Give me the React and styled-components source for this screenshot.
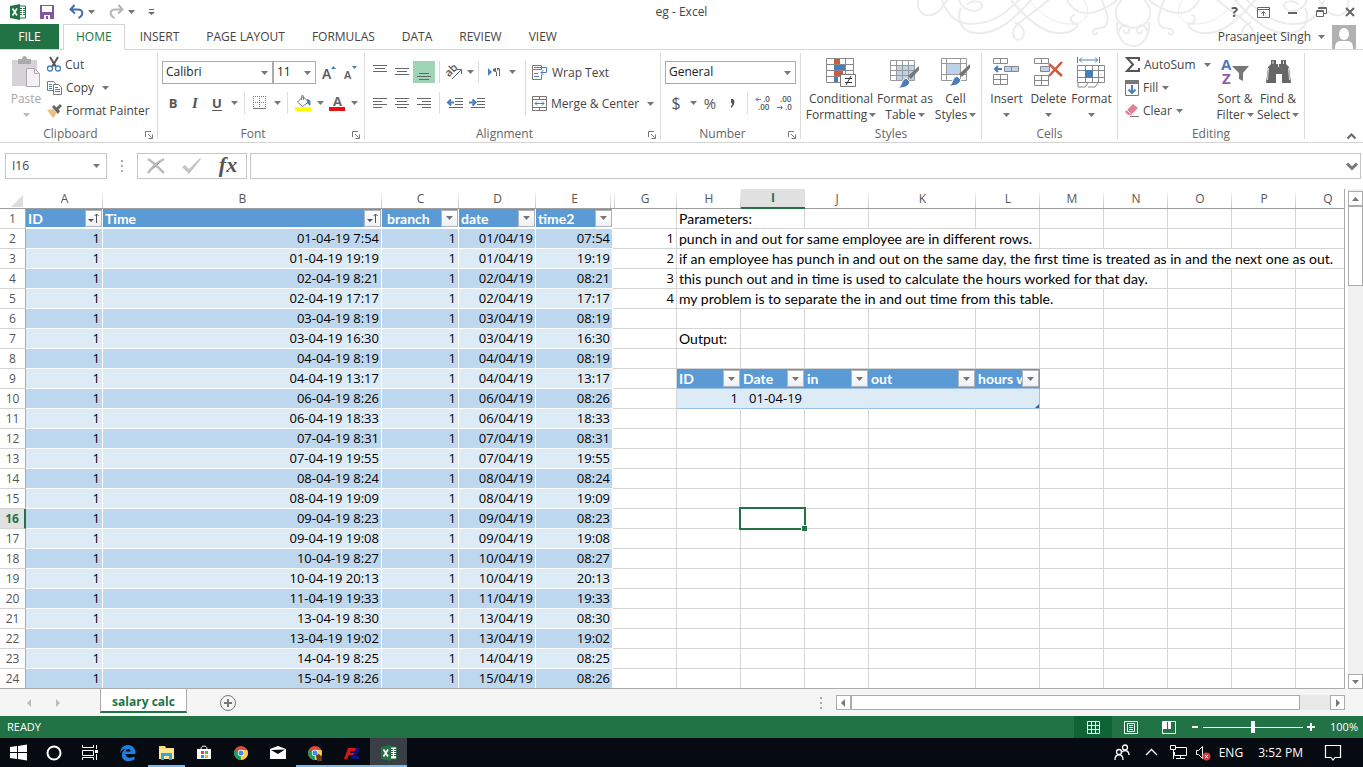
import React from 'react';
import styled, { createGlobalStyle, css } from 'styled-components';

const GlobalStyle = createGlobalStyle`
  *, *::before, *::after {
    box-sizing: border-box;
  }
  body {
    margin: 0;
    background: #fff;
    color: #444;
    font: 12px/16px 'Open Sans', 'Noto Sans', sans-serif;
  }
  button, input, select {
    font: inherit;
    color: inherit;
    margin: 0;
    padding: 0;
    border: 0;
    border-radius: 0;
    background: none;
  }
  svg {
    display: block;
    flex: none;
    overflow: visible;
  }
`;

const App = styled.div`
  display: flex;
  flex-direction: column;
  height: 100vh;
  overflow: hidden;
`;

/* ---------- title bar ---------- */

const Top = styled.header`
  position: relative;
  flex: none;
`;

const Swirls = styled.svg`
  position: absolute;
  top: 0;
  right: 0;
  overflow: hidden;
`;

const TitleBar = styled.div`
  position: relative;
  display: grid;
  grid-template-columns: 1fr auto 1fr;
  align-items: center;
  height: 24px;
`;

const QuickAccess = styled.div`
  display: flex;
  align-items: center;
  padding-left: 9px;
`;

const WindowButtons = styled.div`
  display: flex;
  justify-content: flex-end;
`;

const PlainButton = styled.button`
  display: flex;
  align-items: center;
  justify-content: center;
  flex: none;
  width: ${p => p.$w || 22}px;
  height: ${p => p.$h || 22}px;
  margin-left: ${p => p.$gap || 0}px;
  background: ${p => (p.$on ? '#9fd5b7' : 'none')};
`;

const TabBar = styled.nav`
  position: relative;
  display: flex;
  align-items: stretch;
  height: 26px;
  border-bottom: 1px solid #d4d4d4;
`;

const FileTab = styled.button`
  width: 59px;
  margin-right: 4px;
  background: #217346;
  color: #fff;
`;

const Tab = styled.button`
  flex: none;
  padding: 0 12px;
  margin-right: 3px;
  ${p => p.$active && css`
    margin-bottom: -1px;
    border: 1px solid #d4d4d4;
    border-bottom-color: #fff;
    background: #fff;
    color: #217346;
  `}
`;

const Account = styled.button`
  display: flex;
  align-items: center;
  gap: 7px;
  margin-left: auto;
  margin-right: 7px;
`;

/* ---------- ribbon ---------- */

const Ribbon = styled.div`
  display: flex;
  position: relative;
  flex: none;
  height: 93px;
  padding: 3px 0;
  border-bottom: 1px solid #d4d4d4;
`;

const Group = styled.section`
  display: flex;
  flex-direction: column;
  flex: none;
  width: ${p => p.$w}px;
  border-right: 1px solid #dcdcdc;
`;

const GroupBody = styled.div`
  display: flex;
  height: 74px;
  padding-left: ${p => p.$pad || 0}px;
`;

const GroupLabel = styled.div`
  position: relative;
  height: 12px;
  padding-right: ${p => (p.$launcher ? 16 : 0)}px;
  text-align: center;
  line-height: 14px;
  color: #666;
  svg {
    position: absolute;
    right: 4px;
    top: 4px;
  }
`;

const Stack = styled.div`
  display: flex;
  flex-direction: column;
  flex: none;
  width: ${p => (p.$w ? `${p.$w}px` : 'auto')};
  padding-top: ${p => p.$top || 0}px;
  gap: ${p => p.$gap || 0}px;
`;

const Line = styled.div`
  display: flex;
  align-items: center;
  height: 22px;
`;

const TextButton = styled.button`
  display: flex;
  align-items: center;
  gap: 4px;
  height: 23px;
  white-space: nowrap;
`;

const CaretSlot = styled.span`
  padding: 0 4px;
`;

const Divider = styled.i`
  flex: none;
  width: 1px;
  height: 22px;
  margin: 0 4px;
  background: #dcdcdc;
`;

const TallDivider = styled.i`
  width: 1px;
  height: 54px;
  margin: 8px 6px 0;
  background: #dcdcdc;
`;

const BigButton = styled.button`
  display: flex;
  flex-direction: column;
  align-items: center;
  flex: none;
  width: ${p => p.$w}px;
  height: 74px;
  white-space: nowrap;
  color: ${p => (p.$off ? '#a6a6a6' : 'inherit')};
  > svg {
    height: 34px;
    margin: 3px 0 1px;
  }
`;

const BigLine = styled.span`
  display: flex;
  align-items: center;
  gap: 2px;
  height: 16px;
`;

const Field = styled.label`
  position: relative;
  width: ${p => p.$w}px;
  height: 23px;
  svg {
    position: absolute;
    right: 5px;
    top: 10px;
    pointer-events: none;
  }
`;

const Select = styled.select`
  appearance: none;
  width: 100%;
  height: 100%;
  padding: 0 3px;
  border: 1px solid #ababab;
  background: #fff;
  color: #222;
`;

const Glyph = styled.span`
  font: ${p => p.$weight || 'bold'} ${p => p.$size || 13}px/18px 'Open Sans', sans-serif;
  font-style: ${p => (p.$italic ? 'italic' : 'normal')};
  font-family: ${p => (p.$italic ? "'Liberation Serif', serif" : "'Open Sans', sans-serif")};
  text-decoration: ${p => (p.$underline ? 'underline' : 'none')};
  text-underline-offset: 2px;
  color: #555;
`;

const Collapse = styled.button`
  margin: auto 7px 0 auto;
`;

/* ---------- formula bar ---------- */

const FormulaBar = styled.div`
  display: flex;
  align-items: center;
  flex: none;
  height: 46px;
  padding: 0 2px 0 5px;
`;

const Box = styled.div`
  display: flex;
  align-items: center;
  height: 26px;
  border: 1px solid #c6c6c6;
`;

const NameBox = styled(Box)`
  width: 102px;
  padding: 0 6px;
  input {
    flex: 1;
    min-width: 0;
  }
`;

const FxBox = styled(Box)`
  justify-content: space-around;
  width: 110px;
  margin-right: 3px;
`;

const FormulaBox = styled(Box)`
  flex: 1;
  padding: 0 2px 0 6px;
  input {
    flex: 1;
    min-width: 0;
    outline: 0;
  }
`;

const Dots = styled.i`
  width: 2px;
  height: 12px;
  margin: 0 14px;
  background: repeating-linear-gradient(#aaa 0 2px, transparent 2px 5px);
`;

/* ---------- worksheet ---------- */

const Workspace = styled.main`
  display: flex;
  flex: 1;
  min-height: 0;
`;

const SheetArea = styled.div`
  flex: 1;
  min-width: 0;
  overflow: hidden;
  border-right: 1px solid #ababab;
  border-bottom: 1px solid #ababab;
`;

const Sheet = styled.table`
  table-layout: fixed;
  width: 100%;
  border-collapse: separate;
  border-spacing: 0;
  color: #000;
  font: 14px/19px Lato, 'Open Sans', sans-serif;
  th, td {
    height: 20px;
    padding: 0;
  }
`;

const separator = 'linear-gradient(#fff, #c6c6c6)';

const ColHead = styled.th`
  border-bottom: 1px solid #9f9f9f;
  background: ${separator} right / 1px 100% no-repeat;
  color: #555;
  font: normal 12px/18px 'Open Sans', sans-serif;
  ${p => p.$beforeHidden && css`
    background: ${separator} right 2px top / 1px 100% no-repeat;
  `}
  ${p => p.$afterHidden && css`
    background:
      ${separator} left 1px top / 1px 100% no-repeat,
      ${separator} right / 1px 100% no-repeat;
  `}
  ${p => p.$active && css`
    border-bottom: 2px solid #217346;
    background: #e1e1e1;
    color: #217346;
    font-weight: bold;
  `}
`;

const Corner = styled.th`
  border-bottom: 1px solid #9f9f9f;
  svg {
    margin: 5px 3px 0 auto;
  }
`;

const RowHead = styled.th`
  border-right: ${p => (p.$active ? '2px solid #217346' : '1px solid #ababab')};
  border-bottom: 1px solid #d4d4d4;
  background: ${p => (p.$active ? '#e1e1e1' : '#fff')};
  color: ${p => (p.$active ? '#217346' : '#555')};
  font: ${p => (p.$active ? 'bold' : 'normal')} 12px/18px 'Open Sans', sans-serif;
`;

const Cell = styled.td`
  position: relative;
  border-right: 1px solid #d4d4d4;
  border-bottom: 1px solid #d4d4d4;
  white-space: nowrap;
  text-align: right;
  font: 13px/19px 'Open Sans', sans-serif;
  && {
    padding: 0 2px;
  }
  ${p => p.$text && css`
    text-align: left;
    font: inherit;
  `}
  ${p => p.$band && css`
    border-color: #fff;
    background: ${p.$band};
  `}
  ${p => p.$out && css`
    border-right-color: ${p.$last ? '#9bc2e6' : '#ddebf7'};
    border-bottom-color: #9bc2e6;
    background: #ddebf7;
  `}
`;

const HeadCell = styled.td`
  border-right: 1px solid ${p => (p.$out ? '#5b9bd5' : '#fff')};
  border-bottom: ${p => (p.$out ? '1px solid #9bc2e6' : '2px solid #fff')};
  background: #5b9bd5;
  color: #fff;
  font-weight: bold;
  > div {
    display: flex;
    align-items: center;
    height: 18px;
    padding-left: ${p => (p.$indent ? 5 : 2)}px;
  }
  span {
    flex: 1;
    min-width: 0;
    overflow: hidden;
    white-space: nowrap;
  }
`;

const FilterButton = styled.button`
  display: flex;
  align-items: center;
  justify-content: center;
  flex: none;
  width: 17px;
  height: 17px;
  border: 1px solid #b0b4bc;
  background: linear-gradient(#fff, #eef0f4);
`;

const Cursor = styled.i`
  position: absolute;
  inset: -2px;
  border: 2px solid #217346;
  z-index: 1;
  &::after {
    content: '';
    position: absolute;
    right: -3px;
    bottom: -3px;
    width: 6px;
    height: 6px;
    border: solid #fff;
    border-width: 1px 0 0 1px;
    background: #217346;
  }
`;

const TableCorner = styled.i`
  position: absolute;
  right: 0;
  bottom: 0;
  border: 2px solid #3f5ea8;
  border-top-color: transparent;
  border-left-color: transparent;
`;

const VScroll = styled.div`
  display: flex;
  flex-direction: column;
  flex: none;
  width: 18px;
  padding: 2px 0 0 3px;
  background: linear-gradient(#f1f1f1, #f1f1f1) right / 15px 100% no-repeat;
`;

const ScrollButton = styled.button`
  display: flex;
  align-items: center;
  justify-content: center;
  flex: none;
  width: 15px;
  height: 15px;
  border: 1px solid #ababab;
  background: #fff;
`;

const VThumb = styled.div`
  height: 16%;
  margin-bottom: auto;
  border: 1px solid #ababab;
  background: #fff;
`;

const SheetBar = styled.div`
  display: flex;
  align-items: center;
  flex: none;
  height: 27px;
  padding-right: 18px;
  background: #f5f5f5;
`;

const SheetNav = styled.div`
  display: flex;
  justify-content: center;
  gap: 22px;
  width: 100px;
  padding-right: 13px;
`;

const SheetTab = styled.button`
  align-self: flex-start;
  width: 87px;
  height: 24px;
  margin-right: 33px;
  padding-top: 3px;
  border: 1px solid #ababab;
  border-top: 0;
  border-bottom: 2px solid #217346;
  background: #fff;
  color: #217346;
  font-weight: bold;
`;

const Spacer = styled.div`
  flex: 1;
`;

const HScroll = styled.div`
  display: flex;
  width: 38%;
  max-width: 509px;
  background: #e8e8e8;
`;

const HThumb = styled.div`
  flex: 1;
  margin-right: 30px;
  border: 1px solid #ababab;
  background: #fff;
`;

/* ---------- status bar and taskbar ---------- */

const StatusBar = styled.footer`
  display: flex;
  align-items: center;
  flex: none;
  height: 22px;
  padding: 0 5px 0 7px;
  background: #217346;
  color: #fff;
  font-size: 11px;
`;

const ViewButton = styled.button`
  display: flex;
  align-items: center;
  justify-content: center;
  width: 38px;
  height: 22px;
  background: ${p => (p.$on ? '#0e6435' : 'none')};
`;

const Zoom = styled.input`
  appearance: none;
  width: 100px;
  height: 12px;
  margin: 0 3px;
  background: linear-gradient(#fff, #fff) center / 100% 1px no-repeat;
  &::-webkit-slider-thumb {
    appearance: none;
    width: 4px;
    height: 12px;
    background: #fff;
  }
`;

const Taskbar = styled.div`
  display: flex;
  flex: none;
  height: 29px;
  background: #060b12;
  color: #fff;
`;

const Task = styled.button`
  display: flex;
  align-items: center;
  justify-content: center;
  width: ${p => p.$w || 37}px;
  background: ${p => (p.$active ? '#3a3f45' : 'none')};
  box-shadow: ${p => (p.$open ? 'inset 0 -2px #76b9ed' : 'none')};
`;

const Tray = styled.div`
  display: flex;
  align-items: center;
  gap: 8px;
  margin-left: auto;
  padding-right: 22px;
`;

const Clock = styled.time`
  padding: 0 14px 0 7px;
`;

/* ---------- icons ---------- */

const Caret = ({ color = '#777' }) => (
  <svg width='7' height='4'><path d='M0 0h7L3.500 4z' fill={color} /></svg>
);

const Launcher = () => (
  <svg width='8' height='8' fill='none' stroke='#777'>
    <path d='M.5 6V.5H6M3 3l3.500 3.500M7.500 3.500v4h-4' />
  </svg>
);

const Lines = ({ rows }) => (
  <svg width='14' height='14' stroke='#666'>
    {rows.map(([x1, x2, y]) => <path key={y} d={`M${x1} ${y}.5H${x2}`} />)}
  </svg>
);

const ExcelIcon = () => (
  <svg width='16' height='16' viewBox='0 0 16 16'>
    <path d='M9 2h6.500v12H9z' fill='#fff' stroke='#217346' />
    <path d='M10 4.500h2M13 4.500h2M10 6.500h2M13 6.500h2M10 8.500h2M13 8.500h2M10 10.500h2M13 10.500h2' stroke='#217346' />
    <path d='M0 2l10-2v16L0 14z' fill='#217346' />
    <path d='M2.500 4.500l4.500 7M7 4.500l-4.500 7' stroke='#fff' strokeWidth='1.600' />
  </svg>
);

const SaveIcon = () => (
  <svg width='14' height='14'>
    <path d='M0 0h14v14H0z' fill='#8356a5' />
    <path d='M2 1h10v6H2zM4 10h6v4H8v-3H6v3H4z' fill='#fff' />
  </svg>
);

const UndoIcon = ({ color, flip }) => (
  <svg width='15' height='14' viewBox='0 0 15 14' fill='none' stroke={color} strokeWidth='2'>
    <g transform={flip ? 'matrix(-1 0 0 1 15 0)' : undefined}>
      <path d='M5.500 0L1.500 4.500l4.500 4M2 4.500h6.500c6 0 6.500 5.500 1 8.500' />
    </g>
  </svg>
);

const SwirlArt = () => (
  <Swirls width='458' height='49' fill='none' stroke='#ececec'>
    <defs>
      <g id='scroll-half'>
        <path strokeWidth='2' d='M13-1C11 10 18 17 26 15 36 13 38 4 44-2M36-2C42 14 50 24 66 24 90 24 104 10 116-2' />
        <path strokeWidth='2' d='M54 0C58 12 74 14 77 6 77 0 66 0 62 5' />
        <path strokeWidth='2' d='M56 8C50 20 58 32 70 33 95 36 115 12 128-2' />
        <path strokeWidth='2' d='M146-2C128 14 108 24 108 32c0 10 10 10 11 1 0-6-5-8-9-11' />
        <path strokeWidth='2' d='M104-2c14 16 30 34 48 35 14 1 20-5 21-9' />
        <path strokeWidth='1' d='M122-2c14 16 26 26 43 26 19 0 22-14 12-26' />
        <path strokeWidth='2' d='M161-2c6 14 18 18 32 13 10-4 18-8 20-13M170 15c-6 0-6 9 3 9' />
        <path strokeWidth='2' d='M196-2c6 14 11 28 0 30-8 1-8 2-8 5 1 3 5 1 4-1' />
        <path strokeWidth='2' d='M218-2c-14 16-6 28 10 30M212 22c-1 14 6 24 16 24M213 34c2-11 11-11 11-4 0 5-6 4-5 0' />
      </g>
    </defs>
    <use href='#scroll-half' />
    <use href='#scroll-half' transform='matrix(-1 0 0 1 456 0)' />
  </Swirls>
);

const Avatar = () => (
  <svg width='24' height='24'>
    <path d='M0 0h24v24H0z' fill='#b1b1b1' />
    <ellipse cx='12' cy='9' rx='5' ry='6' fill='#fff' />
    <path d='M3 24c0-6 2-8 6-8h6c4 0 6 2 6 8z' fill='#fff' />
  </svg>
);

const PasteIcon = () => (
  <svg width='30' height='34' viewBox='0 0 30 34'>
    <path d='M1 4h25v26H1z' fill='#d6d3d8' />
    <path d='M7 3h4c0-4 5-4 5 0h4v5H7z' fill='#aaa' />
    <path d='M15.500 12.500h8l5 5v13h-13z' fill='#f5f0f8' stroke='#aaa' />
    <path d='M23.500 12.500v5h5' fill='none' stroke='#aaa' />
  </svg>
);

const CutIcon = () => (
  <svg width='14' height='15' fill='none'>
    <path d='M3 0l6 10M11 0L5 10' stroke='#555' strokeWidth='2' />
    <circle cx='3' cy='11.500' r='2.500' stroke='#4a7ebb' strokeWidth='1.300' />
    <circle cx='11' cy='11.500' r='2.500' stroke='#4a7ebb' strokeWidth='1.300' />
  </svg>
);

const CopyIcon = () => (
  <svg width='15' height='14' fill='#fff' stroke='#777'>
    <path d='M.5.5h6l2 2v7h-8z' />
    <path d='M2 3.500h3M2 5.500h3M2 7.500h3' stroke='#4a7ebb' />
    <path d='M6.500 3.500h5l3 3v7h-8z' />
    <path d='M8 6.500h3M8 8.500h5M8 10.500h5' stroke='#4a7ebb' />
  </svg>
);

const PainterIcon = () => (
  <svg width='15' height='14'>
    <path d='M0 6l6-1 4 4-4 5z' fill='#ecc07c' />
    <path d='M5 3l2-2 6 6-2 3z' fill='#666' />
    <path d='M9 4l4-4 2 2-4 4z' fill='#666' />
  </svg>
);

const GrowIcon = ({ small }) => (
  <svg width='14' height='15'>
    <text x='0' y='14' fontFamily='Open Sans' fontWeight='600' fontSize={small ? 11 : 14} fill='#555'>A</text>
    <path d={small ? 'M8 1h5l-2.500 3z' : 'M9 4h5l-2.500-3z'} fill='#4a7ebb' />
  </svg>
);

const BorderIcon = () => (
  <svg width='14' height='14' stroke='#777'>
    <path d='M.5 0v12M6.500 0v12M12.500 0v12M0 .5h13M0 6.500h13' strokeDasharray='1 1' />
    <path d='M0 12.500h13' />
  </svg>
);

const FillColorIcon = () => (
  <svg width='17' height='17'>
    <path d='M8 1.500l5.500 5.500-6 4.500L2.500 7zM6.500 5V1.500c0-1.500 2-1.500 2 0V5' fill='#fff' stroke='#777' />
    <path d='M12 4c4 0 4 4 3 7l-3-3z' fill='#4a7ebb' />
    <path d='M0 12h16v4H0z' fill='#ffff00' />
  </svg>
);

const FontColorIcon = () => (
  <svg width='16' height='17'>
    <text x='4' y='11' fontFamily='Open Sans' fontWeight='bold' fontSize='13' fill='#666'>A</text>
    <path d='M0 12h16v4H0z' fill='#e81010' />
  </svg>
);

const OrientationIcon = () => (
  <svg width='16' height='16'>
    <text transform='rotate(-45 4 10)' x='0' y='11' fontFamily='Open Sans' fontWeight='600' fontSize='11' fill='#555'>ab</text>
    <path d='M5 15l9-9M10 5.500h4.500V10' fill='none' stroke='#666' />
  </svg>
);

const DirectionIcon = () => (
  <svg width='13' height='10'>
    <path d='M0 1l4 4-4 4z' fill='#4a7ebb' />
    <path d='M12 1H8c-4 0-4 4 0 4zM8 1h1v8H8zM11 1h1v8h-1z' fill='#666' />
  </svg>
);

const IndentIcon = ({ flip }) => (
  <svg width='16' height='12'>
    <path d='M8 1.500h8M8 4.500h8M8 7.500h8M2 10.500h14' stroke='#666' />
    <path d={flip ? 'M0 5.500h5M3.500 2.500l3 3-3 3' : 'M7 5.500H2M4 2.500l-3 3 3 3'} fill='none' stroke='#4a7ebb' strokeWidth='2' />
  </svg>
);

const WrapIcon = () => (
  <svg width='16' height='15' fill='none' stroke='#777'>
    <path d='M9.500 .5h-9v4h9zM9.500 9.500V14.500h-9V4.500' />
    <path d='M2 2.500h12.500v5H9M11.500 5l-2.500 2.500L11.500 10M2 8.500h4M2 11.500h5' stroke='#4a7ebb' />
  </svg>
);

const MergeIcon = () => (
  <svg width='15' height='15' fill='none' stroke='#777'>
    <path d='M.5.500h14v14H.5zM.5 3.500h14M.5 11.500h14M7.500 0v3M7.500 12v3' />
    <path d='M3 7.500h9M5 5.500l-2 2 2 2M10 5.500l2 2-2 2' stroke='#4a7ebb' />
  </svg>
);

const DecimalIcon = ({ more }) => (
  <svg width='16' height='15'>
    <text x={more ? 8 : 3} y='6' fontFamily='Open Sans' fontSize='8' fontWeight='600' fill='#555'>{more ? '.0' : '.00'}</text>
    <text x={more ? 3 : 8} y='14' fontFamily='Open Sans' fontSize='8' fontWeight='600' fill='#555'>{more ? '.00' : '.0'}</text>
    <path d={more ? 'M6 3.500H1M3 1.500l-2 2 2 2' : 'M0 11.500h5M3.500 9.500l2 2-2 2'} fill='none' stroke='#4a7ebb' />
  </svg>
);

const Brush = () => (
  <>
    <path d='M29 5v4l-8 9-3-3z' fill='#777' />
    <path d='M16 17l4 4c-2 5-6 6-12 6 4-2 3-8 8-10z' fill='#4a7ebb' stroke='#fff' />
  </>
);

const ConditionalIcon = () => (
  <svg width='31' height='34' viewBox='0 0 31 34'>
    <path d='M.5 2.500h27v24H.5zM.5 8.500h27M.5 14.500h27M.5 20.500h27M8.500 2v24M19.500 2v24' fill='#fff' stroke='#888' />
    <path d='M8 3h6v5H8zM8 15h9v5H8z' fill='#d0593f' />
    <path d='M8 9h11v5H8zM8 21h4v5H8z' fill='#4a7ebb' />
    <path d='M14.500 18.500h15v12h-15z' fill='#fff' stroke='#777' />
    <path d='M19 22.500h7M19 26.500h7M25 20l-5 9' stroke='#333' fill='none' />
  </svg>
);

const FormatTableIcon = () => (
  <svg width='30' height='34' viewBox='0 0 30 34'>
    <path d='M6 9h19v15H6z' fill='#bdd1e8' />
    <path d='M.5 4.500h24v20H.5zM.5 9.500h24M.5 14.500h24M.5 19.500h24M6.500 4v20M12.500 4v20M18.500 4v20' fill='none' stroke='#999' />
    <g transform='translate(0 5)'><Brush /></g>
  </svg>
);

const CellStylesIcon = () => (
  <svg width='30' height='34' viewBox='0 0 30 34'>
    <path d='M.5 2.500h25v22H.5zM.5 7.500h25M.5 18.500h25M5.500 2v22M19.500 2v22' fill='#fff' stroke='#999' />
    <path d='M6 8h13v10H6z' fill='#bdd1e8' />
    <g transform='translate(0 3)'><Brush /></g>
  </svg>
);

const InsertIcon = () => (
  <svg width='27' height='34' viewBox='0 0 27 34' fill='#fff' stroke='#888'>
    <path d='M.5 2.500h14v5H.5zM7.500 2v5M.5 18.500h14v10H.5zM.5 23.500h14M7.500 18v10' />
    <path d='M11.500 10.500h14v5h-14zM18.500 10v5' fill='#bdd1e8' />
    <path d='M9 13H2M5 10l-3 3 3 3' stroke='#4a7ebb' strokeWidth='2' fill='none' />
  </svg>
);

const DeleteIcon = () => (
  <svg width='30' height='34' viewBox='0 0 30 34' fill='#fff' stroke='#888'>
    <path d='M.5 2.500h14v5H.5zM7.500 2v5M.5 19.500h14v10H.5zM.5 24.500h14M7.500 19v10' />
    <path d='M6.500 10.500h9v5h-9z' fill='#bdd1e8' />
    <path d='M15 8l13 12M28 6L15 20' stroke='#d0593f' strokeWidth='2.500' />
  </svg>
);

const FormatIcon = () => (
  <svg width='29' height='34' viewBox='0 0 29 34' fill='none' stroke='#888'>
    <path d='M.5 9.500h27v17H.5zM.5 14.500h27M.5 21.500h27M8.500 9v18M15.500 9v18M21.500 9v18M1 27v4h7l3-4M11 31h7l3-4' />
    <path d='M8 14h8v8H8z' fill='#4a7ebb' stroke='none' />
    <path d='M.5 1v6M22.500 1v6M2 4h19M5 1.500L2.500 4 5 6.500M18 1.500L20.500 4 18 6.500' stroke='#4a7ebb' />
  </svg>
);

const FillIcon = () => (
  <svg width='14' height='16'>
    <path d='M.5.500h13v15H.5z' fill='#fff' stroke='#777' />
    <path d='M0 0h14v4H0z' fill='#777' />
    <path d='M7 5v8M3.500 9.500L7 13l3.500-3.500' fill='none' stroke='#4a7ebb' strokeWidth='2' />
  </svg>
);

const SumIcon = () => (
  <svg width='15' height='15'>
    <path d='M14 4V1H2l6 6.500L2 14h12v-3' fill='none' stroke='#555' strokeWidth='2' />
  </svg>
);

const ClearIcon = () => (
  <svg width='14' height='13'>
    <path d='M8 0l5 4-7 7H3L0 8z' fill='#e37f98' />
    <path d='M2 6l4 4' stroke='#fff' />
    <path d='M5 12.500h9' stroke='#777' />
  </svg>
);

const SortIcon = () => (
  <svg width='30' height='34' viewBox='0 0 30 34'>
    <text x='1' y='14' fontFamily='Open Sans' fontWeight='bold' fontSize='15' fill='#4a7ebb'>A</text>
    <text x='2' y='28' fontFamily='Open Sans' fontWeight='bold' fontSize='15' fill='#8e5ba6'>Z</text>
    <path d='M12 10h17l-6 7v8l-4-2v-6z' fill='#777' />
  </svg>
);

const FindIcon = () => (
  <svg width='27' height='34' viewBox='0 0 27 34' fill='#666'>
    <path d='M6 4h5v4h2v3h1V8h2V4h5v4l3 3 2 16h-9v-9h-6v9H1L3 11l3-3z' />
    <path d='M8 5v3M18.500 5v3M3.500 12l-1 12M23.500 12l1 12' stroke='#ddd' />
  </svg>
);

/* ---------- data ---------- */

const tabs = ['HOME', 'INSERT', 'PAGE LAYOUT', 'FORMULAS', 'DATA', 'REVIEW', 'VIEW'];

const columns = [
  ['A', 77], ['B', 279], ['C', 77], ['D', 77], ['E', 77], ['G', 64], ['H', 64], ['I', 64], ['J', 64],
  ['K', 107], ['L', 64], ['M', 64], ['N', 64], ['O', 64], ['P', 64], ['Q', 64],
];

const punches = [
  '01-04-19 7:54', '01-04-19 19:19', '02-04-19 8:21', '02-04-19 17:17', '03-04-19 8:19', '03-04-19 16:30',
  '04-04-19 8:19', '04-04-19 13:17', '06-04-19 8:26', '06-04-19 18:33', '07-04-19 8:31', '07-04-19 19:55',
  '08-04-19 8:24', '08-04-19 19:09', '09-04-19 8:23', '09-04-19 19:08', '10-04-19 8:27', '10-04-19 20:13',
  '11-04-19 19:33', '13-04-19 8:30', '13-04-19 19:02', '14-04-19 8:25', '15-04-19 8:26',
];

// text that spills to the right covers `span` columns from H
const notes = {
  1: { text: 'Parameters:', span: 2 },
  2: { n: 1, text: 'punch in and out for same employee are in different rows.', span: 5 },
  3: { n: 2, text: 'if an employee has punch in and out on the same day, the first time is treated as in and the next one as out.', span: 10 },
  4: { n: 3, text: 'this punch out and in time is used to calculate the hours worked for that day.', span: 7 },
  5: { n: 4, text: 'my problem is to separate the in and out time from this table.', span: 6 },
  7: { text: 'Output:', span: 1 },
};

const Header = ({ label, sorted, out, indent }) => (
  <HeadCell $out={out} $indent={indent}>
    <div>
      <span>{label}</span>
      <FilterButton aria-label={`Filter ${label}`}>
        {sorted
          ? <svg width='11' height='11'><path d='M0 6h6L3 9z' fill='#555' /><path d='M8.500 10V1M6.500 3l2-2 2 2' fill='none' stroke='#555' /></svg>
          : <Caret />}
      </FilterButton>
    </div>
  </HeadCell>
);

const RightCells = ({ row }) => {
  if (row === 9) {
    return (
      <>
        {['ID', 'Date', 'in', 'out', 'hours worked'].map(h => <Header key={h} label={h} out />)}
        {[0, 1, 2, 3, 4].map(i => <Cell key={i} />)}
      </>
    );
  }
  if (row === 10) {
    return (
      <>
        <Cell $out>1</Cell>
        <Cell $out>01-04-19</Cell>
        <Cell $out />
        <Cell $out />
        <Cell $out $last><TableCorner /></Cell>
        {[0, 1, 2, 3, 4].map(i => <Cell key={i} />)}
      </>
    );
  }
  const note = notes[row];
  const used = note ? note.span : 0;
  return (
    <>
      {note && <Cell $text colSpan={used}>{note.text}</Cell>}
      {Array.from({ length: 10 - used }, (_, i) => (
        <Cell key={i}>{row === 16 && i === 1 && <Cursor />}</Cell>
      ))}
    </>
  );
};

const SheetRow = ({ row }) => {
  const stamp = punches[row - 2];
  const band = row % 2 ? '#ddebf7' : '#bdd7ee';
  return (
    <tr>
      <RowHead scope='row' $active={row === 16}>{row}</RowHead>
      {row === 1 ? (
        <>
          <Header label='ID' sorted />
          <Header label='Time' sorted />
          <Header label='branch' indent />
          <Header label='date' />
          <Header label='time2' />
        </>
      ) : (
        <>
          <Cell $band={band}>1</Cell>
          <Cell $band={band}>{stamp}</Cell>
          <Cell $band={band}>1</Cell>
          <Cell $band={band}>{stamp.slice(0, 8).replace(/-/g, '/')}</Cell>
          <Cell $band={band}>{stamp.slice(9).padStart(5, '0')}</Cell>
        </>
      )}
      <Cell>{notes[row] && notes[row].n}</Cell>
      <RightCells row={row} />
    </tr>
  );
};

const Big = ({ icon, w, lines, off }) => (
  <BigButton $w={w} $off={off}>
    {icon}
    <BigLine>{lines[0]}</BigLine>
    <BigLine>{lines[1]}<Caret color={off ? '#bbb' : undefined} /></BigLine>
  </BigButton>
);

const Combo = ({ label, value, w }) => (
  <Field $w={w}>
    <Select aria-label={label} defaultValue={value}><option>{value}</option></Select>
    <Caret />
  </Field>
);

const Drop = ({ label, w = 12, gap }) => (
  <PlainButton $w={w} $gap={gap} aria-label={label}><Caret /></PlainButton>
);

const Title = () => (
  <Top>
    <SwirlArt />
    <TitleBar>
      <QuickAccess>
        <PlainButton $w={18} aria-label='Excel'><ExcelIcon /></PlainButton>
        <PlainButton $w={18} $gap={11} aria-label='Save'><SaveIcon /></PlainButton>
        <PlainButton $w={18} $gap={11} aria-label='Undo'><UndoIcon color='#3f6fae' /></PlainButton>
        <Drop label='Undo list' />
        <PlainButton $w={18} $gap={10} aria-label='Redo'><UndoIcon color='#b5b5b5' flip /></PlainButton>
        <Drop label='Redo list' />
        <PlainButton $w={14} $gap={7} aria-label='Customize'>
          <svg width='7' height='8'><path d='M1 1.500h5' stroke='#666' /><path d='M0 4h7L3.500 7z' fill='#666' /></svg>
        </PlainButton>
      </QuickAccess>
      <span>eg - Excel</span>
      <WindowButtons>
        <PlainButton $w={29} aria-label='Help'><Glyph $size={14}>?</Glyph></PlainButton>
        <PlainButton $w={29} aria-label='Ribbon display options'>
          <svg width='13' height='11' fill='none' stroke='#666'><path d='M.5.500h12v10H.5zM.5 2.500h12M6.500 9V4.500M4.500 6.500l2-2 2 2' /></svg>
        </PlainButton>
        <PlainButton $w={29} aria-label='Minimize'><svg width='9' height='4'><path d='M0 2h9v2H0z' fill='#666' /></svg></PlainButton>
        <PlainButton $w={29} aria-label='Restore'>
          <svg width='11' height='10' fill='none' stroke='#666'><path d='M2.500 2V.5h8v6H8M.5 3.500h7v6h-7zM.5 4.500h7M2.500 1.500h8' /></svg>
        </PlainButton>
        <PlainButton $w={27} aria-label='Close'><svg width='10' height='10' stroke='#666' strokeWidth='2'><path d='M1 1l8 8M9 1L1 9' /></svg></PlainButton>
      </WindowButtons>
    </TitleBar>
    <TabBar>
      <FileTab>FILE</FileTab>
      {tabs.map((t, i) => <Tab key={t} $active={i === 0}>{t}</Tab>)}
      <Account>Prasanjeet Singh <Caret /><Avatar /></Account>
    </TabBar>
  </Top>
);

const RibbonBar = () => (
  <Ribbon>
    <Group $w={158}>
      <GroupBody $pad={5}>
        <Big icon={<PasteIcon />} w={42} lines={['Paste', '']} off />
        <Stack>
          <TextButton><CutIcon />Cut</TextButton>
          <TextButton><CopyIcon />Copy<CaretSlot><Caret /></CaretSlot></TextButton>
          <TextButton><PainterIcon />Format Painter</TextButton>
        </Stack>
      </GroupBody>
      <GroupLabel $launcher>Clipboard<Launcher /></GroupLabel>
    </Group>
    <Group $w={207}>
      <GroupBody $pad={4}>
        <Stack $top={8} $gap={9}>
          <Line>
            <Combo label='Font' value='Calibri' w={111} />
            <Combo label='Font size' value='11' w={43} />
            <PlainButton $gap={2} aria-label='Increase font size'><GrowIcon /></PlainButton>
            <PlainButton aria-label='Decrease font size'><GrowIcon small /></PlainButton>
          </Line>
          <Line>
            <PlainButton aria-label='Bold'><Glyph>B</Glyph></PlainButton>
            <PlainButton aria-label='Italic'><Glyph $italic $size={15}>I</Glyph></PlainButton>
            <PlainButton aria-label='Underline'><Glyph $underline>U</Glyph></PlainButton>
            <Drop label='Underline style' />
            <Divider />
            <PlainButton aria-label='Borders'><BorderIcon /></PlainButton>
            <Drop label='Border style' />
            <Divider />
            <PlainButton aria-label='Fill colour'><FillColorIcon /></PlainButton>
            <Drop label='Fill colours' />
            <PlainButton aria-label='Font colour'><FontColorIcon /></PlainButton>
            <Drop label='Font colours' />
          </Line>
        </Stack>
      </GroupBody>
      <GroupLabel $launcher>Font<Launcher /></GroupLabel>
    </Group>
    <Group $w={296}>
      <GroupBody $pad={4}>
        <Stack $top={8} $gap={9}>
          <Line>
            <PlainButton aria-label='Top align'><Lines rows={[[0, 14, 0], [2, 12, 3], [0, 14, 6]]} /></PlainButton>
            <PlainButton aria-label='Middle align'><Lines rows={[[0, 14, 3], [2, 12, 6], [0, 14, 9]]} /></PlainButton>
            <PlainButton $on aria-label='Bottom align'><Lines rows={[[2, 12, 8], [0, 14, 11], [2, 12, 14]]} /></PlainButton>
            <Divider />
            <PlainButton aria-label='Orientation'><OrientationIcon /></PlainButton>
            <Drop label='Orientation list' w={8} />
            <Divider />
            <PlainButton aria-label='Text direction'><DirectionIcon /></PlainButton>
            <Drop label='Text direction list' w={14} />
          </Line>
          <Line>
            <PlainButton aria-label='Align left'><Lines rows={[[0, 14, 2], [0, 9, 5], [0, 14, 8], [0, 9, 11]]} /></PlainButton>
            <PlainButton aria-label='Center'><Lines rows={[[0, 14, 2], [2, 12, 5], [0, 14, 8], [2, 12, 11]]} /></PlainButton>
            <PlainButton aria-label='Align right'><Lines rows={[[0, 14, 2], [5, 14, 5], [0, 14, 8], [5, 14, 11]]} /></PlainButton>
            <Divider />
            <PlainButton aria-label='Decrease indent'><IndentIcon /></PlainButton>
            <PlainButton aria-label='Increase indent'><IndentIcon flip /></PlainButton>
          </Line>
        </Stack>
        <TallDivider />
        <Stack $top={8} $gap={8}>
          <TextButton><WrapIcon />Wrap Text</TextButton>
          <TextButton><MergeIcon />Merge &amp; Center<CaretSlot><Caret /></CaretSlot></TextButton>
        </Stack>
      </GroupBody>
      <GroupLabel $launcher>Alignment<Launcher /></GroupLabel>
    </Group>
    <Group $w={140}>
      <GroupBody $pad={4}>
        <Stack $top={8} $gap={9}>
          <Line><Combo label='Number format' value='General' w={131} /></Line>
          <Line>
            <PlainButton aria-label='Accounting format'><Glyph $weight='normal' $size={16}>$</Glyph></PlainButton>
            <Drop label='Currencies' />
            <PlainButton aria-label='Percent style'><Glyph $weight='normal' $size={15}>%</Glyph></PlainButton>
            <PlainButton aria-label='Comma style'>
              <svg width='5' height='9'><path d='M1 0h2c3 2 1 7-2 9V7c2-2 1-3 0-3z' fill='#555' /></svg>
            </PlainButton>
            <Divider />
            <PlainButton aria-label='Increase decimal'><DecimalIcon more /></PlainButton>
            <PlainButton aria-label='Decrease decimal'><DecimalIcon /></PlainButton>
          </Line>
        </Stack>
      </GroupBody>
      <GroupLabel $launcher>Number<Launcher /></GroupLabel>
    </Group>
    <Group $w={181}>
      <GroupBody $pad={5}>
        <Big icon={<ConditionalIcon />} w={70} lines={['Conditional', 'Formatting']} />
        <Big icon={<FormatTableIcon />} w={58} lines={['Format as', 'Table']} />
        <Big icon={<CellStylesIcon />} w={43} lines={['Cell', 'Styles']} />
      </GroupBody>
      <GroupLabel>Styles</GroupLabel>
    </Group>
    <Group $w={136}>
      <GroupBody $pad={4}>
        <Big icon={<InsertIcon />} w={41} lines={['Insert', '']} />
        <Big icon={<DeleteIcon />} w={43} lines={['Delete', '']} />
        <Big icon={<FormatIcon />} w={43} lines={['Format', '']} />
      </GroupBody>
      <GroupLabel>Cells</GroupLabel>
    </Group>
    <Group $w={187}>
      <GroupBody $pad={7}>
        <Stack $w={89}>
          <TextButton><SumIcon />AutoSum<CaretSlot><Caret /></CaretSlot></TextButton>
          <TextButton><FillIcon />Fill<Caret /></TextButton>
          <TextButton><ClearIcon />Clear<Caret /></TextButton>
        </Stack>
        <Big icon={<SortIcon />} w={42} lines={['Sort &', 'Filter']} />
        <Big icon={<FindIcon />} w={44} lines={['Find &', 'Select']} />
      </GroupBody>
      <GroupLabel>Editing</GroupLabel>
    </Group>
    <Collapse aria-label='Collapse ribbon'>
      <svg width='9' height='6' fill='none' stroke='#666' strokeWidth='2'><path d='M.5 5.500l4-4 4 4' /></svg>
    </Collapse>
  </Ribbon>
);

const Formula = () => (
  <FormulaBar>
    <NameBox>
      <input aria-label='Name box' defaultValue='I16' />
      <Caret />
    </NameBox>
    <Dots />
    <FxBox>
      <button aria-label='Cancel'><svg width='18' height='16' stroke='#bbb' strokeWidth='2.500'><path d='M1 1c5 3 11 9 16 14M17 1C11 4 5 9 1 15' /></svg></button>
      <button aria-label='Enter'><svg width='19' height='16'><path d='M0 9l3-2 4 4 11-11 1 1L7 16z' fill='#c4c4c4' /></svg></button>
      <button aria-label='Insert function'><Glyph $italic $size={22}>fx</Glyph></button>
    </FxBox>
    <FormulaBox>
      <input aria-label='Formula' />
      <svg width='12' height='9' fill='none' stroke='#777' strokeWidth='3'><path d='M1 1.500l5 5 5-5' /></svg>
    </FormulaBox>
  </FormulaBar>
);

const Arrow = ({ d, color = '#777' }) => (
  <svg width='7' height='8'><path d={d} fill={color} /></svg>
);

const ChromeIcon = ({ badge }) => (
  <svg width='16' height='16' viewBox='0 0 16 16'>
    <circle cx='8' cy='8' r='7' fill='#dd4b3e' />
    <path d='M8 8L2 4.500A7 7 0 0 0 8 15l3.500-6z' fill='#1a9f5a' />
    <path d='M8 8h-.5l.5 7A7 7 0 0 0 14.300 5H8z' fill='#fdcd45' />
    <circle cx='8' cy='8' r='3.200' fill='#fff' />
    <circle cx='8' cy='8' r='2.500' fill='#4586f0' />
    {badge && <path d='M9 10l3-1 3 3v4h-5z' fill='#6b3a1e' />}
  </svg>
);

const WindowsBar = () => (
  <Taskbar>
    <Task $w={36} aria-label='Start'><svg width='17' height='17' fill='#fff'><path d='M0 3l7-1v6H0zM8 2l9-1.500V8H8zM0 9h7v6l-7-1zM8 9h9v7.500L8 15z' /></svg></Task>
    <Task $w={36} aria-label='Search'><svg width='16' height='16'><circle cx='8' cy='8' r='6.500' fill='none' stroke='#fff' strokeWidth='2' /></svg></Task>
    <Task $w={36} aria-label='Task view'><svg width='17' height='15' fill='none' stroke='#fff'><path d='M.5 0v2.500h11V0M.5 5.500h11v5H.5zM.5 15v-2.500h11V15M14.500 0v4M14.500 9v6' /><path d='M13 5h3v3h-3z' fill='#fff' stroke='none' /></svg></Task>
    <Task $w={40} aria-label='Edge'><svg width='16' height='16'><path d='M0 8C1 2 4 0 8 0c5 0 8 4 7.500 9H5.500c.5 4 5 4.500 9 2.500v3C8 18 1 16 2 9c.5-3 2-4 4-5-3 0-5 2-6 4zM5.500 6.500h5c0-3.500-4.500-3.500-5 0z' fill='#1e7fdc' /></svg></Task>
    <Task $open aria-label='File Explorer'><svg width='17' height='16'><path d='M1 1h6l1 2h8v11H1z' fill='#f8d775' /><path d='M1 4h15v10H1z' fill='#fce795' /><path d='M3 15V8h11v7h-3v-4H6v4z' fill='#35a5dc' /></svg></Task>
    <Task aria-label='Store'><svg width='16' height='16'><path d='M5 4c0-4 6-4 6 0' fill='none' stroke='#fff' /><path d='M1 4h14v10H1z' fill='#fff' /><path d='M5 6h3v3H5z' fill='#e8482c' /><path d='M9 6h3v3H9z' fill='#6fae2e' /><path d='M5 10h3v3H5z' fill='#1e9ae0' /><path d='M9 10h3v3H9z' fill='#f6b912' /></svg></Task>
    <Task aria-label='Chrome'><ChromeIcon /></Task>
    <Task aria-label='Mail'><svg width='16' height='13'><path d='M0 3l8-3 8 3v10H0z' fill='#fff' /><path d='M1 4l14-.5L8 8z' fill='#060b12' /></svg></Task>
    <Task $open aria-label='Chrome profile'><ChromeIcon badge /></Task>
    <Task $open aria-label='FileZilla'><svg width='16' height='14'><path d='M8 2h7l1 2-5 6h4v3H7z' fill='#10107e' /><path d='M4 2h8l-1 3H7L6 7h4l-1 2H5l-2 4H0z' fill='#d31616' /></svg></Task>
    <Task $open $active aria-label='Excel window'><ExcelIcon /></Task>
    <Tray>
      <svg width='16' height='17' fill='none' stroke='#fff' strokeWidth='1.300'><circle cx='5' cy='8' r='2.500' /><circle cx='11' cy='3.500' r='2.500' /><path d='M1 16c0-7 8-7 8 0M8 8c3-3 7-1 7 3' /></svg>
      <svg width='24' height='9' fill='none' stroke='#fff' strokeWidth='1.400'><path d='M8 7l5.500-5.500L19 7' /></svg>
      <svg width='17' height='15' fill='none' stroke='#fff'><path d='M6 2.500h10.500v8H4.500V7M10.500 11v3M6 13.500h9M.5.500h5v4h-5zM3.500 5v9' /></svg>
      <svg width='16' height='16'><path d='M1.500 5.500h2l4-4v12l-4-4h-2z' fill='none' stroke='#fff' /><circle cx='11.500' cy='11.500' r='4' fill='#d93a3f' /><path d='M10 10l3 3M13 10l-3 3' stroke='#fff' /></svg>
      <span>ENG</span>
      <Clock>3:52 PM</Clock>
      <svg width='16' height='16' fill='none' stroke='#fff' strokeWidth='1.200'><path d='M.5.500h15v12H10L8 15l-2-2.500H.5z' /></svg>
    </Tray>
  </Taskbar>
);

const Excel = () => (
  <App>
    <GlobalStyle />
    <Title />
    <RibbonBar />
    <Formula />
    <Workspace>
      <SheetArea>
        <Sheet>
          <colgroup>
            <col style={{ width: 26 }} />
            {columns.map(([name, w]) => <col key={name} style={{ width: w }} />)}
          </colgroup>
          <thead>
            <tr>
              <Corner><svg width='12' height='12'><path d='M12 0v12H0z' fill='#dcdcdc' /></svg></Corner>
              {columns.map(([name]) => (
                <ColHead
                  key={name}
                  scope='col'
                  $active={name === 'I'}
                  $beforeHidden={name === 'E'}
                  $afterHidden={name === 'G'}
                >
                  {name}
                </ColHead>
              ))}
            </tr>
          </thead>
          <tbody>
            {Array.from({ length: 24 }, (_, i) => <SheetRow key={i} row={i + 1} />)}
          </tbody>
        </Sheet>
      </SheetArea>
      <VScroll>
        <ScrollButton aria-label='Scroll up'><Arrow d='M0 6h7L3.500 2z' /></ScrollButton>
        <VThumb />
        <ScrollButton aria-label='Scroll down'><Arrow d='M0 2h7L3.500 6z' /></ScrollButton>
      </VScroll>
    </Workspace>
    <SheetBar>
      <SheetNav>
        <Arrow d='M5 0v8L1 4z' color='#bbb' />
        <Arrow d='M1 0v8l4-4z' color='#bbb' />
      </SheetNav>
      <SheetTab>salary calc</SheetTab>
      <PlainButton $w={16} $h={16} aria-label='New sheet'>
        <svg width='16' height='16' fill='none' stroke='#777'><circle cx='8' cy='8' r='7.500' /><path d='M8 4v8M4 8h8' strokeWidth='2' /></svg>
      </PlainButton>
      <Spacer />
      <Dots />
      <HScroll>
        <ScrollButton aria-label='Scroll left'><Arrow d='M5 0v8L1 4z' /></ScrollButton>
        <HThumb />
        <ScrollButton aria-label='Scroll right'><Arrow d='M2 0v8l4-4z' /></ScrollButton>
      </HScroll>
    </SheetBar>
    <StatusBar>
      <span>READY</span>
      <Spacer />
      <ViewButton $on aria-label='Normal view'><svg width='13' height='13' fill='none' stroke='#fff'><path d='M.5.500h12v12H.5zM4.500 0v13M8.500 0v13M0 4.500h13M0 8.500h13' /></svg></ViewButton>
      <ViewButton aria-label='Page layout view'><svg width='14' height='13' fill='none' stroke='#fff'><path d='M.5.500h13v12H.5zM3.500 2.500h7v8h-7zM5 4.500h4M5 6.500h4M5 8.500h4' /></svg></ViewButton>
      <ViewButton aria-label='Page break view'><svg width='14' height='13' fill='none' stroke='#fff'><path d='M.5.500h13v12H.5z' /><path d='M1 1h4v7H1zM6 1h3v7H6z' fill='#fff' stroke='none' /></svg></ViewButton>
      <button aria-label='Zoom out'><svg width='12' height='8'><path d='M4 3h6v2H4z' fill='#fff' /></svg></button>
      <Zoom type='range' aria-label='Zoom' defaultValue='50' />
      <button aria-label='Zoom in'><svg width='24' height='8'><path d='M1 3h8v2H1zM4 0h2v8H4z' fill='#fff' /></svg></button>
      <span>100%</span>
    </StatusBar>
    <WindowsBar />
  </App>
);

export default Excel;
